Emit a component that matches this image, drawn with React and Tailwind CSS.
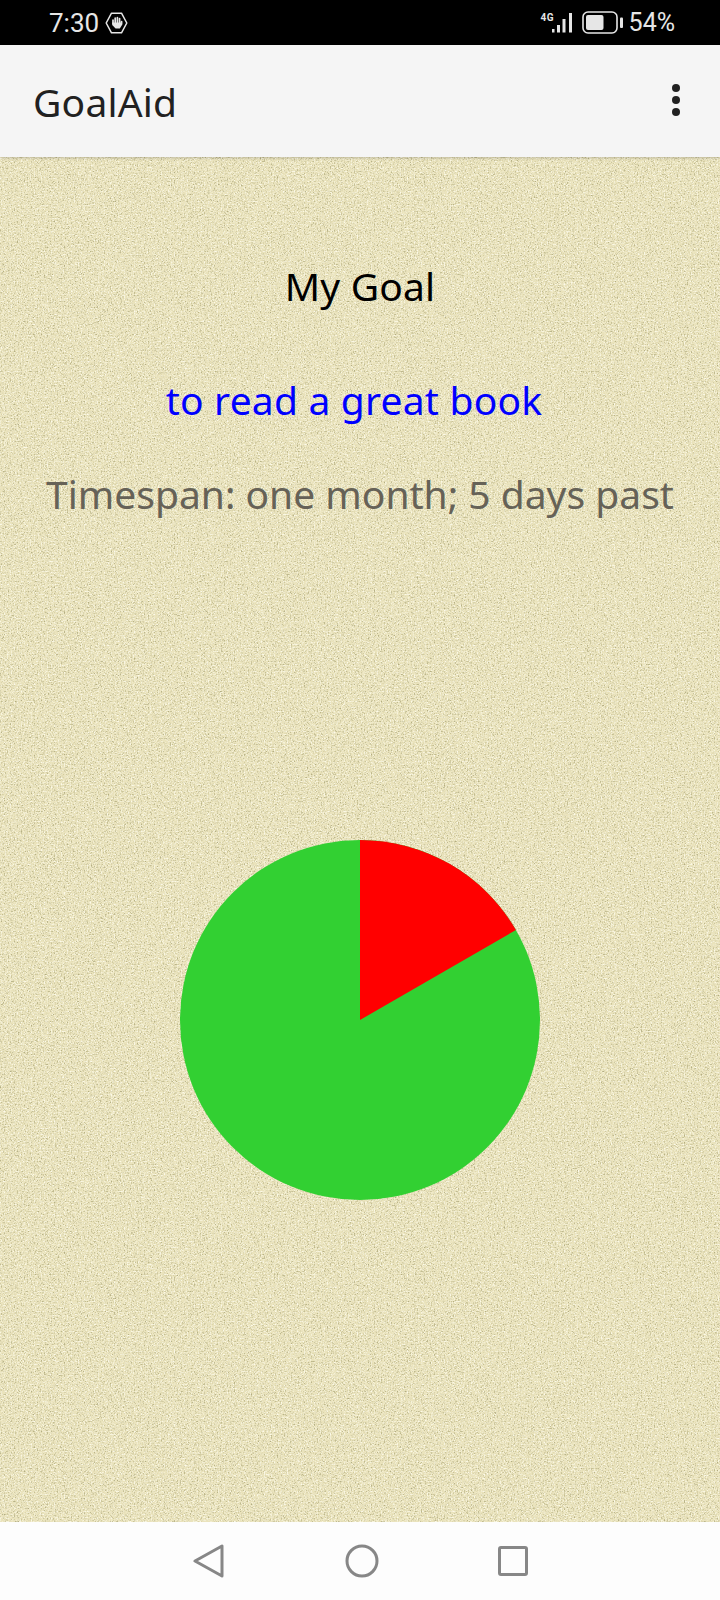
function StatusBar() {
  return (
    <div className="h-[45px] bg-black flex items-center justify-between pl-[49px] pr-[45px] text-[#e6e6e6] font-['Roboto',sans-serif]">
      <div className="flex items-center gap-[6px]">
        <span className="text-[26px] leading-none">7:30</span>
        <svg width="23" height="22" viewBox="0 0 23 22" fill="none">
          <path d="M6.5 1.2h10L21.8 11l-5.3 9.8h-10L1.2 11z" stroke="#e6e6e6" strokeWidth="1.5" strokeLinejoin="round" />
          <path d="M8 11.5V8M10.2 10.5V6M12.4 10.5V5.6M14.6 11V6.6M16.6 12V9.5" stroke="#e6e6e6" strokeWidth="1.7" strokeLinecap="round" />
          <path d="M7.2 10.5h9.8v2.5l-2.2 3.6H10.6L7.2 13z" fill="#e6e6e6" />
        </svg>
      </div>
      <div className="flex items-center">
        <div className="relative w-[33px] h-[24px] mr-[8px]">
          <span className="absolute left-0 top-[2px] text-[10px] leading-[10px] font-bold tracking-[0.5px]">4G</span>
          <svg className="absolute left-0 top-0" width="33" height="24" viewBox="0 0 33 24" fill="#e6e6e6">
            <rect x="11" y="18" width="2.5" height="3.5" />
            <rect x="16" y="14" width="3" height="7.5" />
            <rect x="21.5" y="8" width="3" height="13.5" />
            <rect x="28" y="2" width="3" height="19.5" />
          </svg>
        </div>
        <svg className="mr-[6px]" width="41" height="23" viewBox="0 0 41 23" fill="none">
          <rect x="1" y="1" width="34" height="21" rx="5" stroke="#e6e6e6" strokeWidth="1.6" />
          <rect x="4" y="4" width="17.5" height="15" rx="2" fill="#e6e6e6" />
          <rect x="38" y="6.5" width="3" height="10.5" rx="1" fill="#e6e6e6" />
        </svg>
        <span className="text-[25px] leading-none">54%</span>
      </div>
    </div>
  )
}

function Pie() {
  return (
    <svg width="360" height="360" viewBox="0 0 360 360">
      <circle cx="180" cy="180" r="180" fill="#32d032" />
      <path d="M180 180V0A180 180 0 0 1 335.9 90Z" fill="#ff0000" />
    </svg>
  )
}

export default function App() {
  return (
    <div className="w-[720px] h-[1600px] flex flex-col overflow-hidden font-['Noto_Sans',sans-serif]">
      <StatusBar />
      <header className="relative z-10 h-[112px] bg-[#f5f5f5] flex items-center justify-between pl-[33px] pr-[40px] shadow-[0_1px_3px_rgba(0,0,0,0.2)]">
        <h1 className="text-[39px] leading-none tracking-[0.2px] text-[#212121]">GoalAid</h1>
        <div className="flex flex-col gap-[4px] -mt-[3px]">
          <span className="w-[8px] h-[8px] rounded-full bg-[#212121]" />
          <span className="w-[8px] h-[8px] rounded-full bg-[#212121]" />
          <span className="w-[8px] h-[8px] rounded-full bg-[#212121]" />
        </div>
      </header>
      <main className="relative flex-1 bg-[#eae3bc] flex flex-col items-center overflow-hidden">
        <svg className="absolute inset-0 w-full h-full" aria-hidden="true">
          <filter id="grain-dark">
            <feTurbulence type="fractalNoise" baseFrequency="0.7" numOctaves="2" seed="4" />
            <feColorMatrix type="matrix" values="0 0 0 0 0.45  0 0 0 0 0.42  0 0 0 0 0.22  3 0 0 0 -1.5" />
          </filter>
          <filter id="grain-light">
            <feTurbulence type="fractalNoise" baseFrequency="0.7" numOctaves="2" seed="11" />
            <feColorMatrix type="matrix" values="0 0 0 0 0.98  0 0 0 0 0.96  0 0 0 0 0.82  3 0 0 0 -1.45" />
          </filter>
          <rect width="100%" height="100%" filter="url(#grain-dark)" />
          <rect width="100%" height="100%" filter="url(#grain-light)" />
        </svg>
        <div className="relative flex flex-col items-center w-full">
          <p className="mt-[101px] text-[39px] leading-[56px] tracking-[0.2px] text-black">My Goal</p>
          <p className="mt-[58px] -ml-[12px] text-[39px] leading-[56px] tracking-[0.2px] text-[#0000ff]">to read a great book</p>
          <p className="mt-[38px] text-[39px] leading-[56px] text-[#666257]">Timespan: one month; 5 days past</p>
          <div className="mt-[318px]">
            <Pie />
          </div>
        </div>
      </main>
      <nav className="h-[78px] bg-[#fdfdfd] flex items-center justify-center">
        <svg width="32" height="34" viewBox="0 0 32 34" fill="none" stroke="#878787" strokeWidth="3" strokeLinejoin="round">
          <path d="M2 17 29 2v30z" />
        </svg>
        <svg className="ml-[120px] mr-[119px]" width="34" height="34" viewBox="0 0 34 34" fill="none" stroke="#878787" strokeWidth="3">
          <circle cx="17" cy="17" r="15" />
        </svg>
        <svg width="30" height="30" viewBox="0 0 30 30" fill="none" stroke="#878787" strokeWidth="3" strokeLinejoin="round">
          <rect x="1.5" y="1.5" width="27" height="27" rx="1.5" />
        </svg>
      </nav>
    </div>
  )
}
